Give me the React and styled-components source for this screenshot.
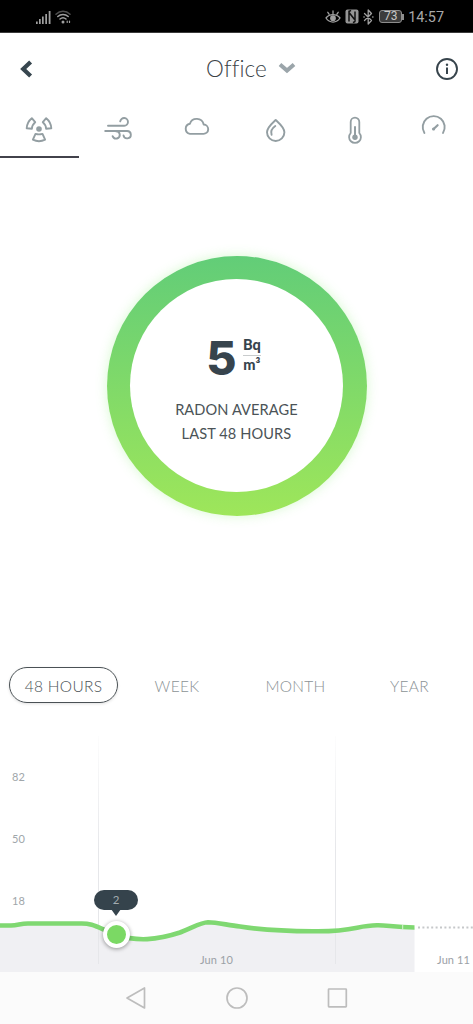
import React from 'react';
import styled, { createGlobalStyle } from 'styled-components';

const GlobalStyle = createGlobalStyle`
    * {
        box-sizing: border-box;
    }
    body {
        margin: 0;
        background: #ffffff;
        font-family: Lato, "Liberation Sans", sans-serif;
        color: #37444d;
    }
    svg {
        display: block;
        flex: none;
    }
`;

const Screen = styled.div`
    width: 473px;
    height: 1024px;
    display: flex;
    flex-direction: column;
    overflow: hidden;
    background: #ffffff;
`;

const StatusBar = styled.div`
    height: 33px;
    flex: none;
    display: flex;
    align-items: center;
    justify-content: space-between;
    padding: 1px 29px 0 35px;
    background: #000000;
    border-bottom: 1px solid #3a3a3a;
    color: #a0a0a0;
`;

const StatusGroup = styled.div`
    display: flex;
    align-items: center;
    gap: ${({ $gap }) => $gap}px;
`;

const Battery = styled.div`
    width: 23px;
    height: 13px;
    margin: 0 2px 0 1px;
    border: 1px solid #8d8d8d;
    border-radius: 3px;
    background: #3c3c3c;
    color: #c8c8c8;
    font: 12px/11.5px Roboto, sans-serif;
    text-align: center;
`;

const BatteryCap = styled.div`
    width: 2px;
    height: 6px;
    margin-left: -6px;
    background: #8d8d8d;
`;

const Clock = styled.div`
    padding-top: 2px;
    font: 14.4px/16px Roboto, sans-serif;
    color: #a8a8a8;
`;

const Header = styled.header`
    height: 72px;
    flex: none;
    display: grid;
    grid-template-columns: 60px 1fr 60px;
    align-items: center;
`;

const HeaderButton = styled.button`
    display: flex;
    justify-content: ${({ $side }) => ($side === 'left' ? 'flex-start' : 'flex-end')};
    padding: ${({ $side }) => ($side === 'left' ? '0 0 1px 19px' : '0 14.5px 1px 0')};
    border: 0;
    background: none;
`;

const RoomPicker = styled.div`
    display: flex;
    align-items: center;
    justify-content: center;
    gap: 11px;
    padding-left: 29px;
    justify-self: center;

    svg {
        margin-bottom: 3px;
    }
`;

const RoomName = styled.h1`
    margin: 0;
    font-size: 22.5px;
    line-height: 28px;
    font-weight: 300;
    letter-spacing: 0.1px;
    color: #3c4347;
`;

const Tabs = styled.nav`
    height: 53px;
    flex: none;
    display: grid;
    grid-template-columns: repeat(6, 1fr);
`;

const Tab = styled.div`
    display: flex;
    justify-content: center;
    padding-top: 8px;
    border-bottom: 2px solid ${({ $active }) => ($active ? '#42424b' : 'transparent')};
    color: #939ea2;
`;

const GaugeArea = styled.section`
    height: 455px;
    flex: none;
    display: flex;
    align-items: center;
    justify-content: center;
`;

const Ring = styled.div`
    width: 260px;
    height: 260px;
    padding: 23.5px;
    border-radius: 50%;
    background: linear-gradient(#62cd78, #9ee65a);
    box-shadow: 0 0 12px rgba(130, 235, 110, 0.32);
`;

const Dial = styled.div`
    height: 100%;
    display: flex;
    flex-direction: column;
    align-items: center;
    padding-top: 54px;
    border-radius: 50%;
    background: #ffffff;
`;

const Reading = styled.div`
    display: flex;
    gap: 8px;
    height: 65px;
    padding-right: 6px;
`;

const Value = styled.div`
    font-family: Inter, sans-serif;
    font-size: 46.5px;
    line-height: 50px;
    font-weight: 800;
    letter-spacing: -1.5px;
`;

const Unit = styled.div`
    padding-top: 3px;
    font-size: 14.5px;
    line-height: 18px;
    font-weight: 900;
`;

const UnitTop = styled.div`
    height: 20px;
    border-bottom: 1px solid #c9cccd;
    text-align: center;
`;

const UnitBottom = styled.div`
    text-align: center;
`;

const Caption = styled.div`
    font-size: 14.6px;
    line-height: 23.7px;
    letter-spacing: 0.1px;
    text-align: center;
    color: #4b5357;
`;

const Ranges = styled.div`
    height: 123px;
    flex: none;
    display: grid;
    grid-template-columns: 127px 100px 137px 91px;
    justify-items: center;
    align-items: start;
    padding-top: 54px;
`;

const Range = styled.div`
    width: ${({ $active }) => ($active ? '109px' : 'auto')};
    height: 36px;
    border: ${({ $active }) => ($active ? '1.5px solid #4a5155' : '1.5px solid transparent')};
    border-radius: 18px;
    box-shadow: ${({ $active }) => ($active ? '0 1px 3px rgba(0, 0, 0, 0.12)' : 'none')};
    font-size: 15.5px;
    line-height: 36px;
    font-weight: 300;
    letter-spacing: 0.3px;
    text-align: center;
    color: ${({ $active }) => ($active ? '#4c5357' : '#8b9295')};
`;

const Chart = styled.section`
    position: relative;
    height: 236px;
    flex: none;
    display: grid;

    > * {
        grid-area: 1 / 1;
    }
`;

const ScaleLabels = styled.div`
    display: flex;
    flex-direction: column;
    gap: 46px;
    padding: 33px 0 0 12px;
    font-size: 11px;
    line-height: 16px;
    color: #a0a6aa;
`;

const DateLabels = styled.div`
    align-self: end;
    display: flex;
    justify-content: space-between;
    padding: 0 3px 4px 200px;
    font-size: 11px;
    line-height: 16px;
    letter-spacing: 0.1px;
    color: #9ba1a6;
`;

const Tooltip = styled.div`
    position: absolute;
    left: 94px;
    top: 153.5px;
    width: 44px;
    height: 20px;
    border-radius: 10px;
    background: #35434c;
    color: #a3acb0;
    font-size: 11.5px;
    line-height: 19px;
    text-align: center;

    &::after {
        content: "";
        position: absolute;
        left: 17px;
        top: 19.5px;
        border: 5px solid transparent;
        border-top: 7px solid #35434c;
        border-bottom: 0;
    }
`;

const Handle = styled.div`
    position: absolute;
    left: 102.5px;
    top: 184.5px;
    width: 27px;
    height: 27px;
    border: 4.5px solid #ffffff;
    border-radius: 50%;
    background: #7bd964;
    box-shadow: 0 1px 4px rgba(0, 0, 0, 0.4);
`;

const NavBar = styled.footer`
    flex: 1;
    display: flex;
    justify-content: center;
    align-items: center;
    gap: 78px;
    background: #fbfbfb;
`;

const line = { fill: 'none', stroke: 'currentColor', strokeLinecap: 'round', strokeLinejoin: 'round' };

const SignalIcon = () => (
    <svg width="17" height="14" viewBox="0 0 17 14" fill="currentColor">
        <path d="M1 11.5h1.7V14H1zM4 9h1.7v5H4zM7 6.5h1.7V14H7zM10.3 4H12v10h-1.7zM13.7 1h1.8v13h-1.8z" />
    </svg>
);

const WifiIcon = () => (
    <svg width="17" height="14" viewBox="0 0 17 14" {...line} strokeWidth="1.5">
        <path d="M1 4.2C5 .4 11 .4 15 4.2" opacity="0.5" />
        <path d="M2.8 6.5c3-2.8 7.4-2.8 10.4 0M5 9c1.8-1.6 4.2-1.6 6 0" />
        <circle cx="8" cy="12" r="1.5" fill="currentColor" stroke="none" />
        <path d="M12.2 11v1.5M14.5 11v1.5" strokeWidth="1.2" />
    </svg>
);

const EyeIcon = () => (
    <svg width="16" height="14" viewBox="0 0 16 14" {...line} strokeWidth="1.3">
        <path d="M1 8c3.5-4.6 10.5-4.6 14 0-3.5 5.4-10.5 5.4-14 0z" />
        <circle cx="8" cy="8.2" r="2.2" fill="currentColor" />
        <path d="M8 3.5V1M4.2 4.3L2.8 2.3M11.8 4.3l1.4-2" />
    </svg>
);

const NfcIcon = () => (
    <svg width="14" height="15" viewBox="0 0 14 15">
        <rect x=".5" y=".5" width="13" height="14" rx="2" fill="#969696" />
        <path d="M4 12.5V3.5l6 7.5V2.5M6 1.3l-2 1.2M8 13.7l2-1.2" fill="none" stroke="#111111" strokeWidth="1.5" />
    </svg>
);

const BluetoothIcon = () => (
    <svg width="11" height="16" viewBox="0 0 11 16" {...line} strokeWidth="1.3">
        <path d="M1.5 4.5l7 7L5.2 15V1l3.3 3.5-7 7" />
        <path d="M1 8h.1M9.8 8h.1" strokeWidth="1.6" />
    </svg>
);

const BackIcon = () => (
    <svg width="14" height="20" viewBox="0 0 14 20" {...line} stroke="#37464f" strokeWidth="4.2" strokeLinecap="butt" strokeLinejoin="miter">
        <path d="M11.6 2.9L4.2 10l7.4 7.1" />
    </svg>
);

const ChevronIcon = () => (
    <svg width="18" height="12" viewBox="0 0 18 12" {...line} stroke="#9ba5aa" strokeWidth="4" strokeLinecap="butt" strokeLinejoin="miter">
        <path d="M2 2.5l7 6 7-6" />
    </svg>
);

const InfoIcon = () => (
    <svg width="24" height="24" viewBox="0 0 24 24" {...line} stroke="#37444c" strokeWidth="1.9">
        <circle cx="12" cy="12" r="10" />
        <path d="M12 10.5V17" strokeWidth="2" strokeLinecap="butt" />
        <circle cx="12" cy="7.7" r="1.2" fill="#37444c" stroke="none" />
    </svg>
);

const RadonIcon = () => (
    <svg width="32" height="32" viewBox="0 0 32 32" {...line} strokeWidth="1.9">
        <circle cx="16" cy="16" r="2.8" fill="currentColor" stroke="none" />
        <path d="M8.8 5.2Q4 9 3.7 15.3l5.2.4q.2-4 3.3-6.500z" />
        <path d="M23.2 5.2Q28 9 28.3 15.3l-5.200.4q-.2-4-3.3-6.500z" />
        <path d="M12.5 20.9q3.5 1 7 0l2.6 5.7q-6.100 3.2-12.200 0z" />
    </svg>
);

const WindIcon = () => (
    <svg width="32" height="32" viewBox="0 0 32 32" {...line} strokeWidth="1.9">
        <path d="M6 12.8h16.2a3.9 3.9 0 1 0-4-4.4" />
        <path d="M3.2 18h22a3.7 3.7 0 1 1-3.7 4.4M14 18.2a3.7 3.7 0 1 1-3.4 5" />
    </svg>
);

const CloudIcon = () => (
    <svg width="32" height="32" viewBox="0 0 32 32" {...line} strokeWidth="1.9">
        <path d="M8.9 20.9h13.4a4.7 4.7 0 0 0 .4-9.4A7.2 7.2 0 0 0 8.9 10.7a5.2 5.2 0 0 0 0 10.2z" />
    </svg>
);

const DropIcon = () => (
    <svg width="32" height="32" viewBox="0 0 32 32" {...line} strokeWidth="1.9">
        <path d="M15.7 7c3.3 3.2 8.7 7.3 8.7 12.3a8.7 8.7 0 0 1-17.4 0C7 14.3 12.4 10.2 15.7 7z" />
        <path d="M15.3 13c-3.7 2.5-5 4.8-3.7 8.8" />
    </svg>
);

const ThermometerIcon = () => (
    <svg width="32" height="32" viewBox="0 0 32 32" {...line} strokeWidth="1.8">
        <path d="M11.7 20V9a4.3 4.3 0 0 1 8.6 0v11a5.9 5.9 0 1 1-8.6 0z" />
        <path d="M16 14v10" strokeWidth="2" />
        <circle cx="16" cy="24.3" r="2.7" fill="currentColor" stroke="none" />
    </svg>
);

const PressureIcon = () => (
    <svg width="32" height="32" viewBox="0 0 32 32" {...line} strokeWidth="1.9">
        <path d="M6.4 20A11 11 0 1 1 25 20" />
        <path d="M15.6 16l4-3.8" strokeWidth="2.2" />
        <circle cx="15.6" cy="16" r="1.6" fill="currentColor" stroke="none" />
    </svg>
);

const tabs = [RadonIcon, WindIcon, CloudIcon, DropIcon, ThermometerIcon, PressureIcon];
const ranges = ['48 HOURS', 'WEEK', 'MONTH', 'YEAR'];

const curve =
    'M0 189.5H11C18 189.5 20 187.5 28 187.5H80C94 187 98 192 116 198.5C137 206 157 204 180 196.500C196 190 201 186.5 208 186.300C217 186.3 227 189 240 190.5C265 194.5 290 195.2 313 195.200C354 196 356 189.5 377 189.3C387 189 394 191.5 414.5 191.5';

const LevelChart = () => (
    <svg width="473" height="236" viewBox="0 0 473 236">
        <defs>
            <linearGradient id="rule" x1="0" y1="0" x2="0" y2="1">
                <stop offset="0" stopColor="#e6e7ea" stopOpacity="0.1" />
                <stop offset="0.5" stopColor="#e6e7ea" />
            </linearGradient>
        </defs>
        <path d={`${curve}V236H0Z`} fill="#f0f0f3" />
        <rect x="98" y="0" width="1" height="228" fill="url(#rule)" />
        <rect x="335" y="0" width="1" height="228" fill="url(#rule)" />
        <path d={curve} fill="none" stroke="#7fd871" strokeWidth="4.6" />
        <path d="M402.7 189v5" stroke="#d8f4d2" />
        <path d="M418 191.5h55" stroke="#c6c8ca" strokeWidth="2" strokeDasharray="2 2.4" />
    </svg>
);

const App = () => {
    return (
        <>
            <GlobalStyle />
            <Screen>
                <StatusBar>
                    <StatusGroup $gap={3}>
                        <SignalIcon />
                        <WifiIcon />
                    </StatusGroup>
                    <StatusGroup $gap={4}>
                        <EyeIcon />
                        <NfcIcon />
                        <BluetoothIcon />
                        <Battery>73</Battery>
                        <BatteryCap />
                        <Clock>14:57</Clock>
                    </StatusGroup>
                </StatusBar>
                <Header>
                    <HeaderButton $side="left"><BackIcon /></HeaderButton>
                    <RoomPicker>
                        <RoomName>Office</RoomName>
                        <ChevronIcon />
                    </RoomPicker>
                    <HeaderButton $side="right"><InfoIcon /></HeaderButton>
                </Header>
                <Tabs>
                    {tabs.map((Icon, i) => (
                        <Tab key={i} $active={i === 0}><Icon /></Tab>
                    ))}
                </Tabs>
                <GaugeArea>
                    <Ring>
                        <Dial>
                            <Reading>
                                <Value>5</Value>
                                <Unit>
                                    <UnitTop>Bq</UnitTop>
                                    <UnitBottom>m³</UnitBottom>
                                </Unit>
                            </Reading>
                            <Caption>RADON AVERAGE<br />LAST 48 HOURS</Caption>
                        </Dial>
                    </Ring>
                </GaugeArea>
                <Ranges>
                    {ranges.map((name, i) => (
                        <Range key={name} $active={i === 0}>{name}</Range>
                    ))}
                </Ranges>
                <Chart>
                    <LevelChart />
                    <ScaleLabels>
                        <span>82</span>
                        <span>50</span>
                        <span>18</span>
                    </ScaleLabels>
                    <DateLabels>
                        <span>Jun 10</span>
                        <span>Jun 11</span>
                    </DateLabels>
                    <Handle />
                    <Tooltip>2</Tooltip>
                </Chart>
                <NavBar>
                    <svg width="22" height="24" viewBox="0 0 22 24" {...line} stroke="#bdbdbd" strokeWidth="1.7">
                        <path d="M19.5 2v20L2 12z" />
                    </svg>
                    <svg width="24" height="24" viewBox="0 0 24 24" {...line} stroke="#bdbdbd" strokeWidth="1.7">
                        <circle cx="12" cy="12" r="10" />
                    </svg>
                    <svg width="22" height="22" viewBox="0 0 22 22" {...line} stroke="#bdbdbd" strokeWidth="1.7">
                        <rect x="1.5" y="2" width="17.8" height="17.8" rx=".5" />
                    </svg>
                </NavBar>
            </Screen>
        </>
    );
};

export default App;
